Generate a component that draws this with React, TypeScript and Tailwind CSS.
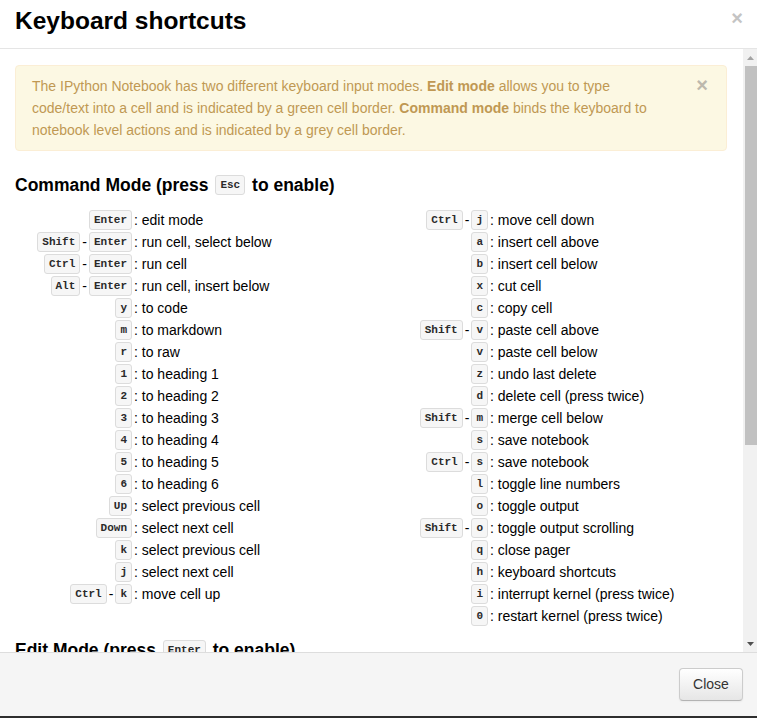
import React from "react";

type Row = { keys: string[]; desc: string };

const left: Row[] = [
  { keys: ["Enter"], desc: "edit mode" },
  { keys: ["Shift", "Enter"], desc: "run cell, select below" },
  { keys: ["Ctrl", "Enter"], desc: "run cell" },
  { keys: ["Alt", "Enter"], desc: "run cell, insert below" },
  { keys: ["y"], desc: "to code" },
  { keys: ["m"], desc: "to markdown" },
  { keys: ["r"], desc: "to raw" },
  { keys: ["1"], desc: "to heading 1" },
  { keys: ["2"], desc: "to heading 2" },
  { keys: ["3"], desc: "to heading 3" },
  { keys: ["4"], desc: "to heading 4" },
  { keys: ["5"], desc: "to heading 5" },
  { keys: ["6"], desc: "to heading 6" },
  { keys: ["Up"], desc: "select previous cell" },
  { keys: ["Down"], desc: "select next cell" },
  { keys: ["k"], desc: "select previous cell" },
  { keys: ["j"], desc: "select next cell" },
  { keys: ["Ctrl", "k"], desc: "move cell up" },
];

const right: Row[] = [
  { keys: ["Ctrl", "j"], desc: "move cell down" },
  { keys: ["a"], desc: "insert cell above" },
  { keys: ["b"], desc: "insert cell below" },
  { keys: ["x"], desc: "cut cell" },
  { keys: ["c"], desc: "copy cell" },
  { keys: ["Shift", "v"], desc: "paste cell above" },
  { keys: ["v"], desc: "paste cell below" },
  { keys: ["z"], desc: "undo last delete" },
  { keys: ["d"], desc: "delete cell (press twice)" },
  { keys: ["Shift", "m"], desc: "merge cell below" },
  { keys: ["s"], desc: "save notebook" },
  { keys: ["Ctrl", "s"], desc: "save notebook" },
  { keys: ["l"], desc: "toggle line numbers" },
  { keys: ["o"], desc: "toggle output" },
  { keys: ["Shift", "o"], desc: "toggle output scrolling" },
  { keys: ["q"], desc: "close pager" },
  { keys: ["h"], desc: "keyboard shortcuts" },
  { keys: ["i"], desc: "interrupt kernel (press twice)" },
  { keys: ["0"], desc: "restart kernel (press twice)" },
];

function Kbd({ children }: { children: React.ReactNode }) {
  return (
    <span className="mx-[2px] inline-block rounded-[3px] border border-[#dcdcdc] bg-[#f6f6f6] px-[4px] font-['Liberation_Mono',monospace] text-[11px] font-bold leading-[18px] text-[#2a2a2a]">
      {children}
    </span>
  );
}

function ShortcutRow({ row }: { row: Row }) {
  return (
    <div className="flex h-[22px] items-center">
      <div className="flex w-[119px] shrink-0 items-center justify-end">
        {row.keys.map((k, i) => (
          <React.Fragment key={i}>
            {i > 0 && <span className="text-[14px]">-</span>}
            <Kbd>{k}</Kbd>
          </React.Fragment>
        ))}
      </div>
      <span className="whitespace-pre text-[14px]">: {row.desc}</span>
    </div>
  );
}

function Heading({ pre, k, post }: { pre: string; k: string; post: string }) {
  return (
    <div className="flex h-[22px] items-center whitespace-pre text-[17.5px] font-bold text-black">
      <span>{pre}</span>
      <Kbd>{k}</Kbd>
      <span>{post}</span>
    </div>
  );
}

export default function App() {
  return (
    <div className="flex h-[718px] w-[757px] flex-col overflow-hidden bg-white font-['Liberation_Sans',Arial,sans-serif] text-black">
      {/* Header */}
      <div className="flex h-[49px] shrink-0 items-start justify-between border-b border-[#e5e5e5] pl-[15px] pr-[14px] pt-[6px]">
        <h3 className="text-[24.5px] font-bold leading-[30px] text-black">Keyboard shortcuts</h3>
        <span className="mt-[2px] text-[20px] font-bold leading-[20px] text-[#c4c4c4]">×</span>
      </div>

      {/* Body */}
      <div className="flex min-h-0 flex-1">
        <div className="min-w-0 flex-1 overflow-hidden pl-[15px] pr-[16px] pt-[16px]">
          <div className="relative rounded-[4px] border border-[#fbeed5] bg-[#fcf8e3] pb-[9px] pl-[16px] pr-[50px] pt-[9px] text-[14px] leading-[22px] text-[#c09853]">
            <span className="absolute right-[18px] top-[9px] text-[20px] font-bold leading-[20px] text-[#bdb9ad]">×</span>
            The IPython Notebook has two different keyboard input modes. <b>Edit mode</b> allows you to type
            <br />
            code/text into a cell and is indicated by a green cell border. <b>Command mode</b> binds the keyboard to
            <br />
            notebook level actions and is indicated by a grey cell border.
          </div>

          <div className="mt-[23px]">
            <Heading pre="Command Mode (press " k="Esc" post=" to enable)" />
          </div>

          <div className="mt-[13px] grid grid-cols-2">
            <div>
              {left.map((r, i) => (
                <ShortcutRow key={i} row={r} />
              ))}
            </div>
            <div>
              {right.map((r, i) => (
                <ShortcutRow key={i} row={r} />
              ))}
            </div>
          </div>

          <div className="mt-[12px]">
            <Heading pre="Edit Mode (press " k="Enter" post=" to enable)" />
          </div>
        </div>

        {/* Scrollbar */}
        <div className="flex w-[14px] shrink-0 flex-col bg-[#f1f1f1]">
          <div className="flex h-[17px] items-center justify-center pl-[1px]">
            <svg width="7" height="4" viewBox="0 0 7 4">
              <path d="M3.5 0 L7 4 L0 4 Z" fill="#a3a3a3" />
            </svg>
          </div>
          <div className="ml-[2px] h-[379px] bg-[#c1c1c1]" />
          <div className="flex-1" />
          <div className="flex h-[17px] items-center justify-center pl-[1px]">
            <svg width="7" height="4" viewBox="0 0 7 4">
              <path d="M0 0 L7 0 L3.5 4 Z" fill="#505050" />
            </svg>
          </div>
        </div>
      </div>

      {/* Footer */}
      <div className="flex h-[64px] shrink-0 items-start justify-end border-t border-[#dddddd] bg-[#f5f5f5] pr-[14px] pt-[15px]">
        <button className="h-[33px] w-[64px] rounded-[4px] border border-[#cccccc] border-b-[#b3b3b3] bg-gradient-to-b from-white to-[#e6e6e6] text-[14px] text-[#333] shadow-[0_1px_2px_rgba(0,0,0,0.05)]">
          Close
        </button>
      </div>
      <div className="h-[2px] shrink-0 bg-[#2e2e2e]" />
    </div>
  );
}
